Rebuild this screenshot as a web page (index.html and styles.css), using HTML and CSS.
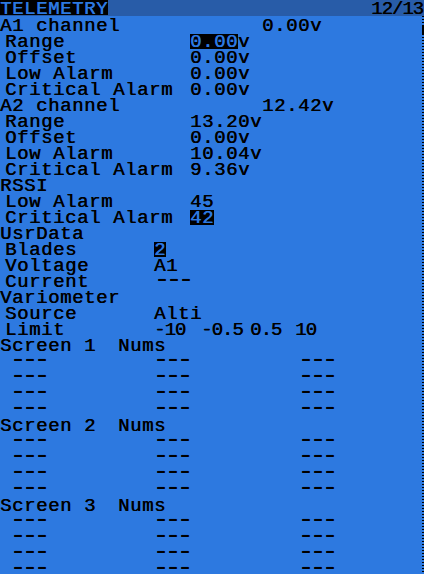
FILE: index.html
```html
<!DOCTYPE html>
<html>
<head>
<meta charset="utf-8">
<link rel="stylesheet" href="styles.css">
</head>
<body>
<div class="lcd">
  <div class="titlebar">
    <div class="title">TELEMETRY</div>
    <div class="pager">12/13</div>
  </div>
  <div class="content">
    <div class="list">
      <div class="row"><span class="hl">A1 channel</span><span>0.00v</span></div>
      <div class="row sub"><span class="l1">Range</span><span><span class="inv">0.00</span>v</span></div>
      <div class="row sub"><span class="l1">Offset</span><span>0.00v</span></div>
      <div class="row sub"><span class="l1">Low Alarm</span><span>0.00v</span></div>
      <div class="row sub"><span class="l1">Critical Alarm</span><span>0.00v</span></div>
      <div class="row"><span class="hl">A2 channel</span><span>12.42v</span></div>
      <div class="row sub"><span class="l1">Range</span><span>13.20v</span></div>
      <div class="row sub"><span class="l1">Offset</span><span>0.00v</span></div>
      <div class="row sub"><span class="l1">Low Alarm</span><span>10.04v</span></div>
      <div class="row sub"><span class="l1">Critical Alarm</span><span>9.36v</span></div>
      <div class="row"><span>RSSI</span></div>
      <div class="row sub"><span class="l1">Low Alarm</span><span>45</span></div>
      <div class="row sub"><span class="l1">Critical Alarm</span><span><span class="inv">42</span></span></div>
      <div class="row"><span>UsrData</span></div>
      <div class="row sub"><span class="l2">Blades</span><span><span class="inv">2</span></span></div>
      <div class="row sub"><span class="l2">Voltage</span><span>A1</span></div>
      <div class="row sub"><span class="l2">Current</span><span class="dd">---</span></div>
      <div class="row"><span>Variometer</span></div>
      <div class="row sub"><span class="l2">Source</span><span>Alti</span></div>
      <div class="row sub"><span class="l2">Limit</span><span class="lim c1">-10</span><span class="lim c2">-0.5</span><span class="lim c3">0.5</span><span class="lim">10</span></div>
      <div class="row"><span class="sl">Screen 1</span><span>Nums</span></div>
      <div class="row dash"><span class="dd d1">---</span><span class="dd d2">---</span><span class="dd">---</span></div>
      <div class="row dash"><span class="dd d1">---</span><span class="dd d2">---</span><span class="dd">---</span></div>
      <div class="row dash"><span class="dd d1">---</span><span class="dd d2">---</span><span class="dd">---</span></div>
      <div class="row dash"><span class="dd d1">---</span><span class="dd d2">---</span><span class="dd">---</span></div>
      <div class="row"><span class="sl">Screen 2</span><span>Nums</span></div>
      <div class="row dash"><span class="dd d1">---</span><span class="dd d2">---</span><span class="dd">---</span></div>
      <div class="row dash"><span class="dd d1">---</span><span class="dd d2">---</span><span class="dd">---</span></div>
      <div class="row dash"><span class="dd d1">---</span><span class="dd d2">---</span><span class="dd">---</span></div>
      <div class="row dash"><span class="dd d1">---</span><span class="dd d2">---</span><span class="dd">---</span></div>
      <div class="row"><span class="sl">Screen 3</span><span>Nums</span></div>
      <div class="row dash"><span class="dd d1">---</span><span class="dd d2">---</span><span class="dd">---</span></div>
      <div class="row dash"><span class="dd d1">---</span><span class="dd d2">---</span><span class="dd">---</span></div>
      <div class="row dash"><span class="dd d1">---</span><span class="dd d2">---</span><span class="dd">---</span></div>
      <div class="row dash"><span class="dd d1">---</span><span class="dd d2">---</span><span class="dd">---</span></div>
    </div>
    <div class="scroll"><div class="thumb"></div></div>
  </div>
</div>
</body>
</html>
```
FILE: styles.css
```css
html, body {
  margin: 0;
  padding: 0;
  background: #2d79e0;
  overflow: hidden;
}
.lcd {
  width: 424px;
  height: 574px;
  overflow: hidden;
  font-family: "Liberation Mono", "DejaVu Sans Mono", monospace;
  font-size: 19px;
  letter-spacing: 0.6px;
  color: #000;
  text-shadow: 0.5px 0 0 currentColor;
}
.titlebar {
  display: flex;
  justify-content: space-between;
  height: 16px;
  background: #285ca8;
}
.title {
  box-sizing: border-box;
  height: 15px;
  padding-top: 2px;
  line-height: 14px;
  background: #000;
  color: #2d79e0;
  white-space: pre;
}
.pager {
  box-sizing: border-box;
  height: 16px;
  padding-top: 2px;
  padding-right: 1px;
  line-height: 14px;
  letter-spacing: -1px;
}
.content {
  display: flex;
}
.list {
  flex: 1;
}
.row {
  display: flex;
  box-sizing: border-box;
  height: 16px;
  padding-top: 2px;
  line-height: 16px;
  white-space: pre;
}
.sub {
  padding-left: 5px;
}
.hl { width: 262px; }
.l1 { width: 185px; }
.l2 { width: 149px; }
.lim { letter-spacing: -1px; }
.c1 { width: 47px; }
.c2 { width: 49px; }
.c3 { width: 45px; }
.sl { width: 118px; }
.dash { padding-left: 10px; }
.dd {
  font-size: 26px;
  letter-spacing: -3.6px;
  line-height: 12px;
}
.d1 { width: 143px; }
.d2 { width: 145px; }
.inv {
  display: inline-block;
  height: 15px;
  vertical-align: top;
  background: #000;
  color: #2d79e0;
}
.scroll {
  width: 2px;
  height: 558px;
  background: repeating-linear-gradient(to bottom, #000 0, #000 1.5px, transparent 1.5px, transparent 3px);
}
.thumb {
  margin-top: 9px;
  height: 10px;
  background: #000;
}
```
